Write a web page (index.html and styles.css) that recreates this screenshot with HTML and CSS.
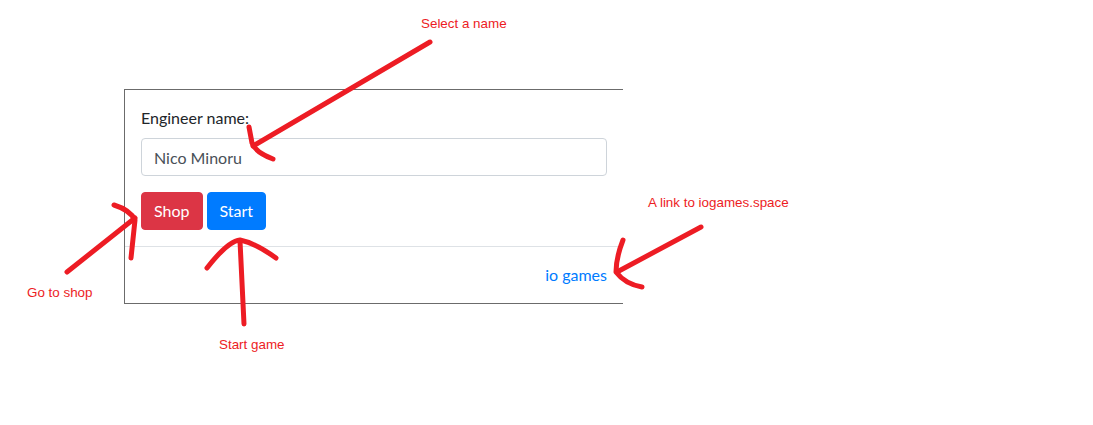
FILE: index.html
```html
<!DOCTYPE html>
<html>
<head>
<meta charset="utf-8">
<link rel="stylesheet" href="styles.css">
</head>
<body>
<div class="stage">
  <div class="modal">
    <div class="modal-body">
      <label class="label" for="name">Engineer name:</label>
      <input class="input" id="name" type="text" value="Nico Minoru">
      <div class="actions">
        <button class="btn btn-red">Shop</button>
        <button class="btn btn-blue">Start</button>
      </div>
    </div>
    <div class="modal-footer">
      <a class="link" href="#">io games</a>
    </div>
  </div>

  <span class="note note-name">Select a name</span>
  <span class="note note-link">A link to iogames.space</span>
  <span class="note note-shop">Go to shop</span>
  <span class="note note-start">Start game</span>

  <svg class="arrows" width="1093" height="425" viewBox="0 0 1093 425">
    <g fill="none" stroke="#ed1c24" stroke-width="5" stroke-linecap="round" stroke-linejoin="round">
      <path d="M430 42 L253 146"/>
      <path d="M249 127 L252 143 Q255 152 273 159"/>
      <path d="M67 272 L135 218"/>
      <path d="M114 205 Q130 210 135 220 L131 258"/>
      <path d="M244 324 L240 241"/>
      <path d="M207 268 Q228 241 240 240 Q255 243 276 258"/>
      <path d="M701 227 L617 272"/>
      <path d="M623 240 Q616 258 616 272 Q625 284 642 287"/>
    </g>
  </svg>
</div>
</body>
</html>
```

FILE: styles.css
```css
html, body {
  margin: 0;
  padding: 0;
  background: #ffffff;
}

.stage {
  position: relative;
  width: 1093px;
  height: 425px;
  padding: 89px 0 0 124px;
  box-sizing: border-box;
  font-family: "Lato", "Noto Sans", sans-serif;
  font-size: 16px;
  line-height: 24px;
  color: #212529;
}

.modal {
  width: 499px;
  box-sizing: border-box;
  border-top: 1px solid #6b6b6b;
  border-left: 1px solid #6b6b6b;
  border-bottom: 1px solid #6b6b6b;
  background: #fff;
}

.modal-body {
  padding: 16px;
  display: flex;
  flex-direction: column;
}

.label {
  display: block;
  margin-bottom: 8px;
}

.input {
  height: 38px;
  box-sizing: border-box;
  border: 1px solid #ced4da;
  border-radius: 4px;
  padding: 6px 12px;
  font: inherit;
  color: #495057;
  outline: none;
  width: 466px;
}

.actions {
  display: flex;
  gap: 4px;
  margin-top: 16px;
}

.btn {
  height: 38px;
  box-sizing: border-box;
  padding: 6px 12px;
  border: 1px solid transparent;
  border-radius: 4px;
  font: inherit;
  color: #fff;
}

.btn-red {
  background: #dc3545;
  border-color: #dc3545;
}

.btn-blue {
  background: #007bff;
  border-color: #007bff;
}

.modal-footer {
  border-top: 1px solid #dee2e6;
  padding: 12px;
  display: flex;
  justify-content: flex-end;
}

.link {
  margin: 4px;
  color: #007bff;
  text-decoration: none;
}

.note {
  position: absolute;
  font-family: "Liberation Sans", Arial, sans-serif;
  font-size: 13.4px;
  line-height: 15px;
  color: #ed1c24;
  white-space: nowrap;
}

.note-name { left: 421px; top: 16px; }
.note-link { left: 648px; top: 195px; }
.note-shop { left: 27px; top: 285px; }
.note-start { left: 219px; top: 337px; }

.arrows {
  position: absolute;
  left: 0;
  top: 0;
  pointer-events: none;
}
```
